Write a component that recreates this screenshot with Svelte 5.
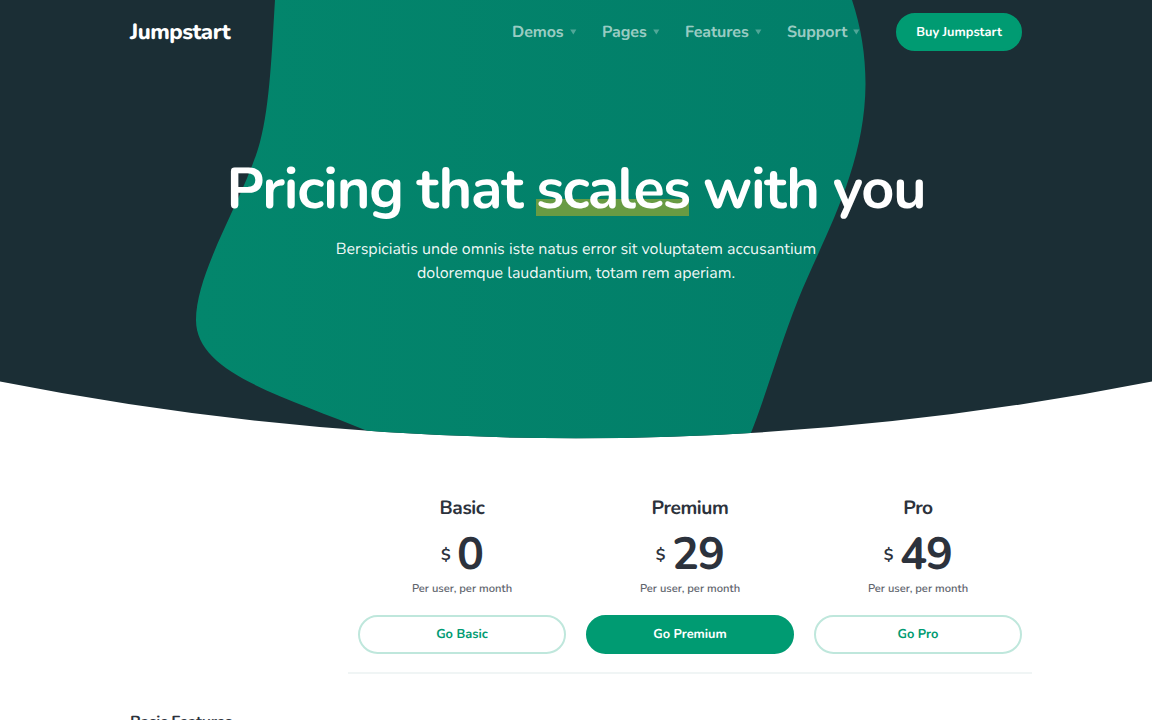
<script>
  const nav = [
    { label: 'Demos', width: 90 },
    { label: 'Pages', width: 83 },
    { label: 'Features', width: 102 },
    { label: 'Support', width: 74 }
  ];
  const plans = [
    { name: 'Basic', price: '0' },
    { name: 'Premium', price: '29', featured: true },
    { name: 'Pro', price: '49' }
  ];
</script>

<div class="page">
  <header class="hero">
    <svg class="backdrop" viewBox="0 0 1152 440" aria-hidden="true">
      <defs>
        <linearGradient id="green" x1="0" x2="1" y1="0" y2="0">
          <stop offset="0" stop-color="#03866c" />
          <stop offset="1" stop-color="#027e69" />
        </linearGradient>
        <clipPath id="bowl"><path d="M0 0H1152V381.5Q576 495 0 381.5Z" /></clipPath>
      </defs>
      <g clip-path="url(#bowl)">
        <rect width="1152" height="440" fill="#1b2e35" />
        <path
          d="M275 0C272 48 270 105 260 142C246 195 196 270 196 320C196 374 284 396 370 432L380 440H748C765 400 779 347 798 300C822 240 865 170 865.5 84C865.500 55 861 27 852 0Z"
          fill="url(#green)"
        />
      </g>
    </svg>

    <nav class="bar">
      <span class="logo">Jumpstart</span>
      <div class="links">
        {#each nav as item}
          <div class="link" style:width="{item.width}px">
            <span>{item.label}</span>
            <svg width="7" height="6" viewBox="0 0 7 6"><path d="M0.200 0.400H6.400L3.300 5.600Z" fill="currentColor" /></svg>
          </div>
        {/each}
      </div>
      <button class="btn solid buy">Buy Jumpstart</button>
    </nav>

    <div class="intro">
      <h1>Pricing that <mark>scales</mark> with you</h1>
      <p>Berspiciatis unde omnis iste natus error sit voluptatem accusantium</p>
      <p>doloremque laudantium, totam rem aperiam.</p>
    </div>
  </header>

  <main>
    <section class="plans">
      {#each plans as plan}
        <article>
          <h2>{plan.name}</h2>
          <div class="price"><span class="currency">$</span><span class="amount">{plan.price}</span></div>
          <div class="term">Per user, per month</div>
          <button class="btn" class:solid={plan.featured}>Go {plan.name}</button>
        </article>
      {/each}
    </section>
    <h3>Basic Features</h3>
  </main>
</div>

<style>
  :global(body) { margin: 0; background: #fff; }
  .page { width: 1152px; height: 720px; overflow: hidden; font-family: Nunito, Lato, "Open Sans", sans-serif; color: #2c323c; text-rendering: geometricPrecision; }
  .hero { position: relative; height: 440px; color: #fff; }
  .backdrop { position: absolute; inset: 0; width: 1152px; height: 440px; }
  .bar { position: relative; display: flex; align-items: center; height: 64px; padding: 0 129.600px 0 130px; box-sizing: border-box; }
  .logo { width: 382px; font-size: 22px; font-weight: 800; letter-spacing: -0.48px; line-height: 30px; }
  .links { display: flex; width: 383.600px; }
  .link { display: flex; align-items: center; justify-content: flex-start; gap: 6px; font-size: 16px; font-weight: 700; letter-spacing: -0.06px; color: rgba(255, 255, 255, .62); }
  .link svg { opacity: .5; flex: none; }
  .btn { display: block; height: 38.600px; box-sizing: border-box; border: 2px solid #bfe7dc; border-radius: 20px; background: #fff; color: #009b72; font-family: inherit; font-size: 12.8px; font-weight: 700; line-height: 18px; padding: 0; text-rendering: inherit; }
  .btn.solid { background: #009b72; border-color: #009b72; color: #fff; }
  .buy { width: 126.800px; flex: none; }
  .intro { position: relative; text-align: center; padding-top: 91px; }
  h1 { margin: 0 0 12px; font-size: 57.600px; line-height: 70px; font-weight: 700; letter-spacing: -1.150px; word-spacing: -0.600px; white-space: nowrap; }
  mark { letter-spacing: -1.850px; color: inherit; background: linear-gradient(#689b43, #689b43) 0 48px / 100% 17px no-repeat; }
  p { margin: 0; font-size: 16px; line-height: 24px; letter-spacing: -0.03px; color: rgba(255, 255, 255, .95); }
  .plans { display: grid; grid-template-columns: repeat(3, 228px); width: 684px; height: 234px; margin-left: 348px; box-sizing: border-box; border-bottom: 2px solid #f0f5f5; }
  article { padding: 55px 9.600px 0; text-align: center; }
  h2 { margin: 0; font-size: 19.200px; line-height: 26px; font-weight: 700; letter-spacing: -0.4px; }
  .price { display: flex; justify-content: center; align-items: center; gap: 6.500px; height: 56px; margin-top: 6px; }
  .currency { font-size: 16px; font-weight: 700; }
  .amount { font-size: 45px; font-weight: 700; line-height: 56px; letter-spacing: -0.9px; }
  .term { margin: -2px 0 18.300px; font-size: 11.200px; line-height: 16px; font-weight: 600; color: #60656d; }
  article .btn { width: 208.800px; padding-bottom: 1px; }
  h3 { margin: 38px 0 0 130px; font-size: 16px; line-height: 20px; font-weight: 700; letter-spacing: -0.4px; }
</style>
